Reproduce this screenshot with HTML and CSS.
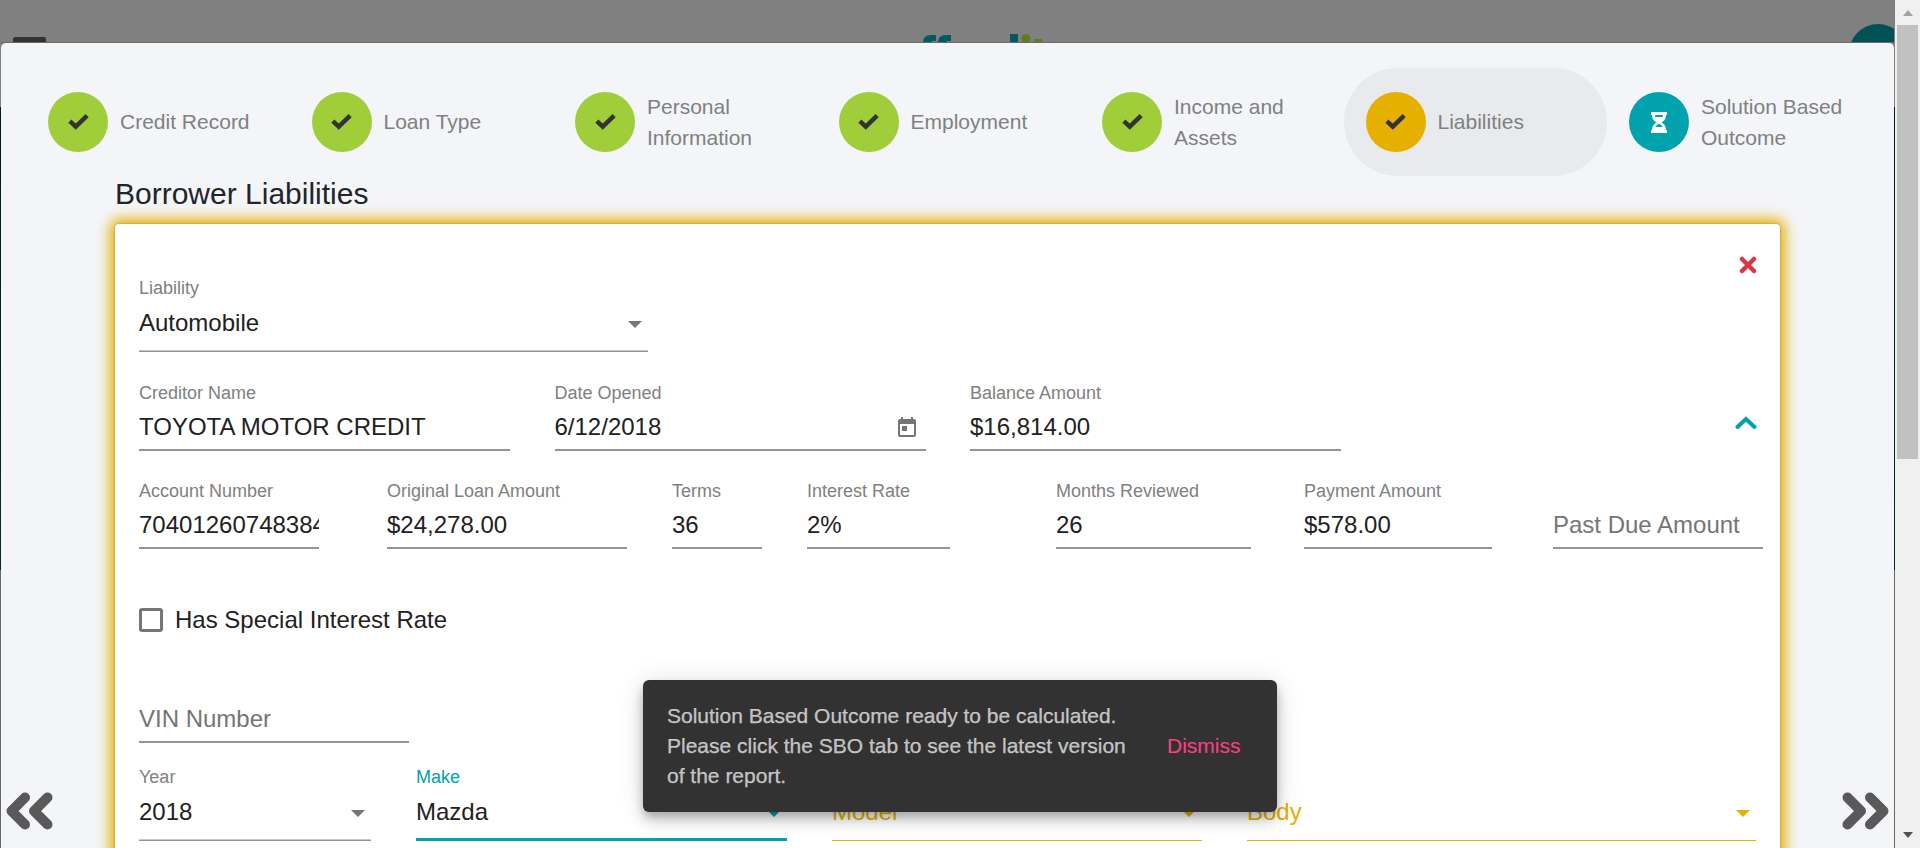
FILE: index.html
```html
<!DOCTYPE html>
<html lang="en">
<head>
<meta charset="utf-8">
<title>Borrower Liabilities</title>
<link rel="stylesheet" href="styles.css">
</head>
<body>
<svg class="defs" aria-hidden="true">
  <symbol id="check" viewBox="0 0 21 16"><path d="M2.6 7.4 8 12.4 18.4 2.4" fill="none" stroke="#333" stroke-width="4.1"/></symbol>
  <symbol id="double" viewBox="0 0 48 38"><path d="M20 5.500 6.500 19 20 32.500M42.500 5.500 29 19l13.500 13.500" fill="none" stroke="#595959" stroke-width="10" stroke-linejoin="round" stroke-linecap="round"/></symbol>
</svg>
<div class="page">
  <header class="topbar">
    <div class="menu"></div>
    <svg class="logo" width="140" height="20" viewBox="0 0 140 20"><path d="M6 20V9Q6 1 14 1h5v6h-3q-2 0-2 3v10zM21 20V9q0-8 8-8h5v6h-3q-2 0-2 3v10zM93 0h8v20h-8z" fill="#005a60"/><circle cx="109" cy="4.500" r="4.500" fill="#5f7d1f"/><path d="M105 12h8v8h-8zM117 5h8v5h4v10h-12z" fill="#5f7d1f"/><path d="M133 20l4-13 3 13z" fill="#005a60"/></svg>
    <div class="avatar"></div>
  </header>
  <main class="dialog">
    <nav class="steps">
      <div class="step"><span class="dot"><svg><use href="#check"/></svg></span><span class="name">Credit Record</span></div>
      <div class="step"><span class="dot"><svg><use href="#check"/></svg></span><span class="name">Loan Type</span></div>
      <div class="step"><span class="dot"><svg><use href="#check"/></svg></span><span class="name">Personal Information</span></div>
      <div class="step"><span class="dot"><svg><use href="#check"/></svg></span><span class="name">Employment</span></div>
      <div class="step"><span class="dot"><svg><use href="#check"/></svg></span><span class="name">Income and Assets</span></div>
      <div class="step active"><span class="dot amber"><svg><use href="#check"/></svg></span><span class="name">Liabilities</span></div>
      <div class="step"><span class="dot teal"><svg class="glass" viewBox="0 0 16 21"><path fill="#fff" fill-rule="evenodd" d="M0 0h16v3h-1c0 4-2 6-4.500 7.500C13 12 15 14 15 18h1v3H0v-3h1c0-4 2-6 4.500-7.500C3 9 1 7 1 3H0zM4 3c0 1 .2 1.500.4 2h7.200q.4-1 .4-2zM4.500 15h7C10.500 13 9.500 12 8 12s-2.500 1-3.500 3z"/></svg></span><span class="name">Solution Based Outcome</span></div>
    </nav>
    <h1>Borrower Liabilities</h1>
    <section class="card">
      <div class="row kind">
        <div class="field select w-kind"><label>Liability</label><div class="value">Automobile<i class="arrow"></i></div></div>
        <svg class="remove" width="18" height="18" viewBox="0 0 18 18"><path d="M3 3l12 12M15 3L3 15" stroke="#dc3545" stroke-width="4.500" stroke-linecap="round"/></svg>
      </div>
      <div class="row creditor">
        <div class="field w-third"><label>Creditor Name</label><div class="value">TOYOTA MOTOR CREDIT</div></div>
        <div class="field w-third"><label>Date Opened</label><div class="value">6/12/2018<svg class="calendar" width="18" height="20" viewBox="0 0 18 20"><path fill="#757575" fill-rule="evenodd" d="M3 0h2v2h8V0h2v2h1q2 0 2 2v14q0 2-2 2H2q-2 0-2-2V4q0-2 2-2h1zM2 7v11h14V7zM4 9h5v5H4z"/></svg></div></div>
        <div class="field w-third"><label>Balance Amount</label><div class="value">$16,814.00</div></div>
        <svg class="collapse" width="22" height="14" viewBox="0 0 22 14"><path d="M2.500 11 11 3l8.500 8" fill="none" stroke="#00a3ad" stroke-width="4" stroke-linecap="round"/></svg>
      </div>
      <div class="row account">
        <div class="field"><label>Account Number</label><div class="value">70401260748384</div></div>
        <div class="field"><label>Original Loan Amount</label><div class="value">$24,278.00</div></div>
        <div class="field"><label>Terms</label><div class="value">36</div></div>
        <div class="field"><label>Interest Rate</label><div class="value">2%</div></div>
        <div class="field"><label>Months Reviewed</label><div class="value">26</div></div>
        <div class="field"><label>Payment Amount</label><div class="value">$578.00</div></div>
        <div class="field"><label></label><div class="value hint">Past Due Amount</div></div>
      </div>
      <div class="special"><span class="box"></span><span>Has Special Interest Rate</span></div>
      <div class="row vin">
        <div class="field w-vin"><label></label><div class="value hint">VIN Number</div></div>
      </div>
      <div class="row vehicle">
        <div class="field select"><label>Year</label><div class="value">2018<i class="arrow"></i></div></div>
        <div class="field select focused"><label>Make</label><div class="value">Mazda<i class="arrow"></i></div></div>
        <div class="field select required"><label></label><div class="value">Model<i class="arrow"></i></div></div>
        <div class="field select required"><label></label><div class="value">Body<i class="arrow"></i></div></div>
      </div>
    </section>
  </main>
  <svg class="prev" width="48" height="38"><use href="#double"/></svg>
  <svg class="next" width="48" height="38"><use href="#double"/></svg>
  <div class="snackbar"><span class="message">Solution Based Outcome ready to be calculated. Please click the SBO tab to see the latest version of the report.</span><span class="dismiss">Dismiss</span></div>
</div>
<aside class="scrollbar"><i class="up"></i><div class="thumb"></div><i class="down"></i></aside>
</body>
</html>
```
FILE: styles.css
```css
* { box-sizing: border-box; }
body { margin: 0; height: 848px; display: flex; overflow: hidden; font-family: "Liberation Sans", Arial, sans-serif; color: #212529; background: #f0f0f0; }
.defs { position: absolute; width: 0; height: 0; }
.page { position: relative; width: 1895px; height: 848px; flex: none; overflow: hidden; display: flex; flex-direction: column; padding: 0 1px; background: linear-gradient(#808080 107px, #001c20 107px, #002b28 570px, #666 570px); }
.topbar { height: 43px; flex: none; display: flex; align-items: flex-start; border-bottom: 1px solid #6b696b; overflow: hidden; }
.menu { width: 33px; height: 8px; flex: none; margin: 37px 0 0 12px; border-radius: 2px; background: #333; }
.logo { flex: none; margin: 34px 0 0 871px; }
.avatar { width: 58px; height: 58px; margin: 24px 0 0 792px; flex: none; border-radius: 50%; background: #005257; }
.dialog { flex: 1; min-height: 0; padding: 25px 26px 0 25px; border-radius: 5px 5px 0 0; background: #f4f5f9; }
.steps { display: flex; height: 108px; }
.step { width: 263.500px; flex: none; display: flex; align-items: center; gap: 12px; padding: 0 22px; border-radius: 54px; font-size: 21px; line-height: 31px; color: #808080; }
.step.active { background: #e9eaed; }
.name { padding-bottom: 1px; }
.dot { width: 60px; height: 60px; flex: none; display: flex; align-items: center; justify-content: center; border-radius: 50%; background: #a0cd3a; }
.dot svg { width: 23px; height: 17.500px; }
.dot .glass { width: 16px; height: 21px; }
.dot.amber { background: #e5b000; }
.dot.teal { background: #00a3ad; }
h1 { margin: 0 0 12px 89px; font-size: 30px; line-height: 36px; font-weight: 400; }
.card { width: 1665px; height: 660px; margin-left: 89px; padding: 52px 17px 0 24px; border-radius: 4px; background: #fff; box-shadow: 0 0 2px rgba(0,0,0,.3), 0 0 14px 5px #e5b000; }
.row { display: flex; }
.field { flex: none; }
.field label { display: block; height: 24px; font-size: 18px; line-height: 24px; color: #808080; white-space: nowrap; }
.value { position: relative; height: 43px; margin-top: 3px; padding-top: 5px; border-bottom: 2px solid #949494; font-size: 24px; line-height: 28px; white-space: nowrap; overflow: hidden; color: #212121; }
.select .value { height: 49px; padding-top: 6px; border-bottom-width: 1px; box-shadow: inset 0 -1px #c8c8c8; }
.hint { color: #757575; }
.arrow { position: absolute; right: 6px; top: 18px; border: 7.500px solid transparent; border-top-color: #757575; border-bottom: 0; }
.kind { justify-content: space-between; padding-right: 7px; }
.w-kind { width: 509px; }
.remove { margin: -20px -1px 0 0; }
.creditor { margin-top: 29px; gap: 44.500px; }
.w-third { width: 371px; }
.calendar { position: absolute; right: 10px; top: 9px; }
.collapse { margin: 35px 0 0 349px; }
.account { margin-top: 28px; display: grid; grid-template-columns: 248px 285px 135px 249px 248px 249px 210px; }
.account .field:nth-child(1) { width: 180px; }
.account .field:nth-child(2) { width: 240px; }
.account .field:nth-child(3) { width: 90px; }
.account .field:nth-child(4) { width: 143px; }
.account .field:nth-child(5) { width: 195px; }
.account .field:nth-child(6) { width: 188px; }
.special { display: flex; align-items: center; gap: 12px; margin-top: 57px; height: 28px; font-size: 24px; color: #212121; }
.box { width: 24px; height: 24px; border: 3px solid #757575; border-radius: 3px; }
.vin { margin-top: 39px; }
.w-vin { width: 270px; }
.vehicle { margin-top: 22px; display: grid; grid-template-columns: 232px 371px 370px 509px; gap: 45px; }
.focused label { color: #00a3ad; }
.focused .value { border-bottom: 3px solid #00a3ad; box-shadow: none; }
.focused .arrow { border-top-color: #00a3ad; }
.required .value { color: #e5b000; border-color: #e5b000; box-shadow: none; }
.required .arrow { border-top-color: #e5b000; }
.prev, .next { position: absolute; top: 792px; }
.prev { left: 5px; }
.next { right: 5px; transform: scaleX(-1); }
.snackbar { position: absolute; left: 643px; top: 680px; width: 634px; height: 132px; display: flex; align-items: center; padding: 0 36px 0 24px; border-radius: 6px; background: #323232; font-size: 21px; line-height: 30px; color: rgba(255,255,255,.7); box-shadow: 0 5px 8px -1px rgba(0,0,0,.2), 0 9px 15px rgba(0,0,0,.14), 0 2px 27px rgba(0,0,0,.12); }
.message { width: 470px; -webkit-text-stroke: .25px; }
.dismiss { margin-left: 30px; color: #ff4081; }
.scrollbar { width: 25px; height: 848px; display: flex; flex-direction: column; align-items: center; background: #f0f0f0; }
.up { margin: 10px 0 9px; border: 5.500px solid transparent; border-top: 0; border-bottom: 6px solid #a3a3a3; }
.thumb { width: 21px; height: 434px; background: #c1c1c1; }
.down { margin-top: 373px; border: 5.500px solid transparent; border-bottom: 0; border-top: 6px solid #505050; }
```
